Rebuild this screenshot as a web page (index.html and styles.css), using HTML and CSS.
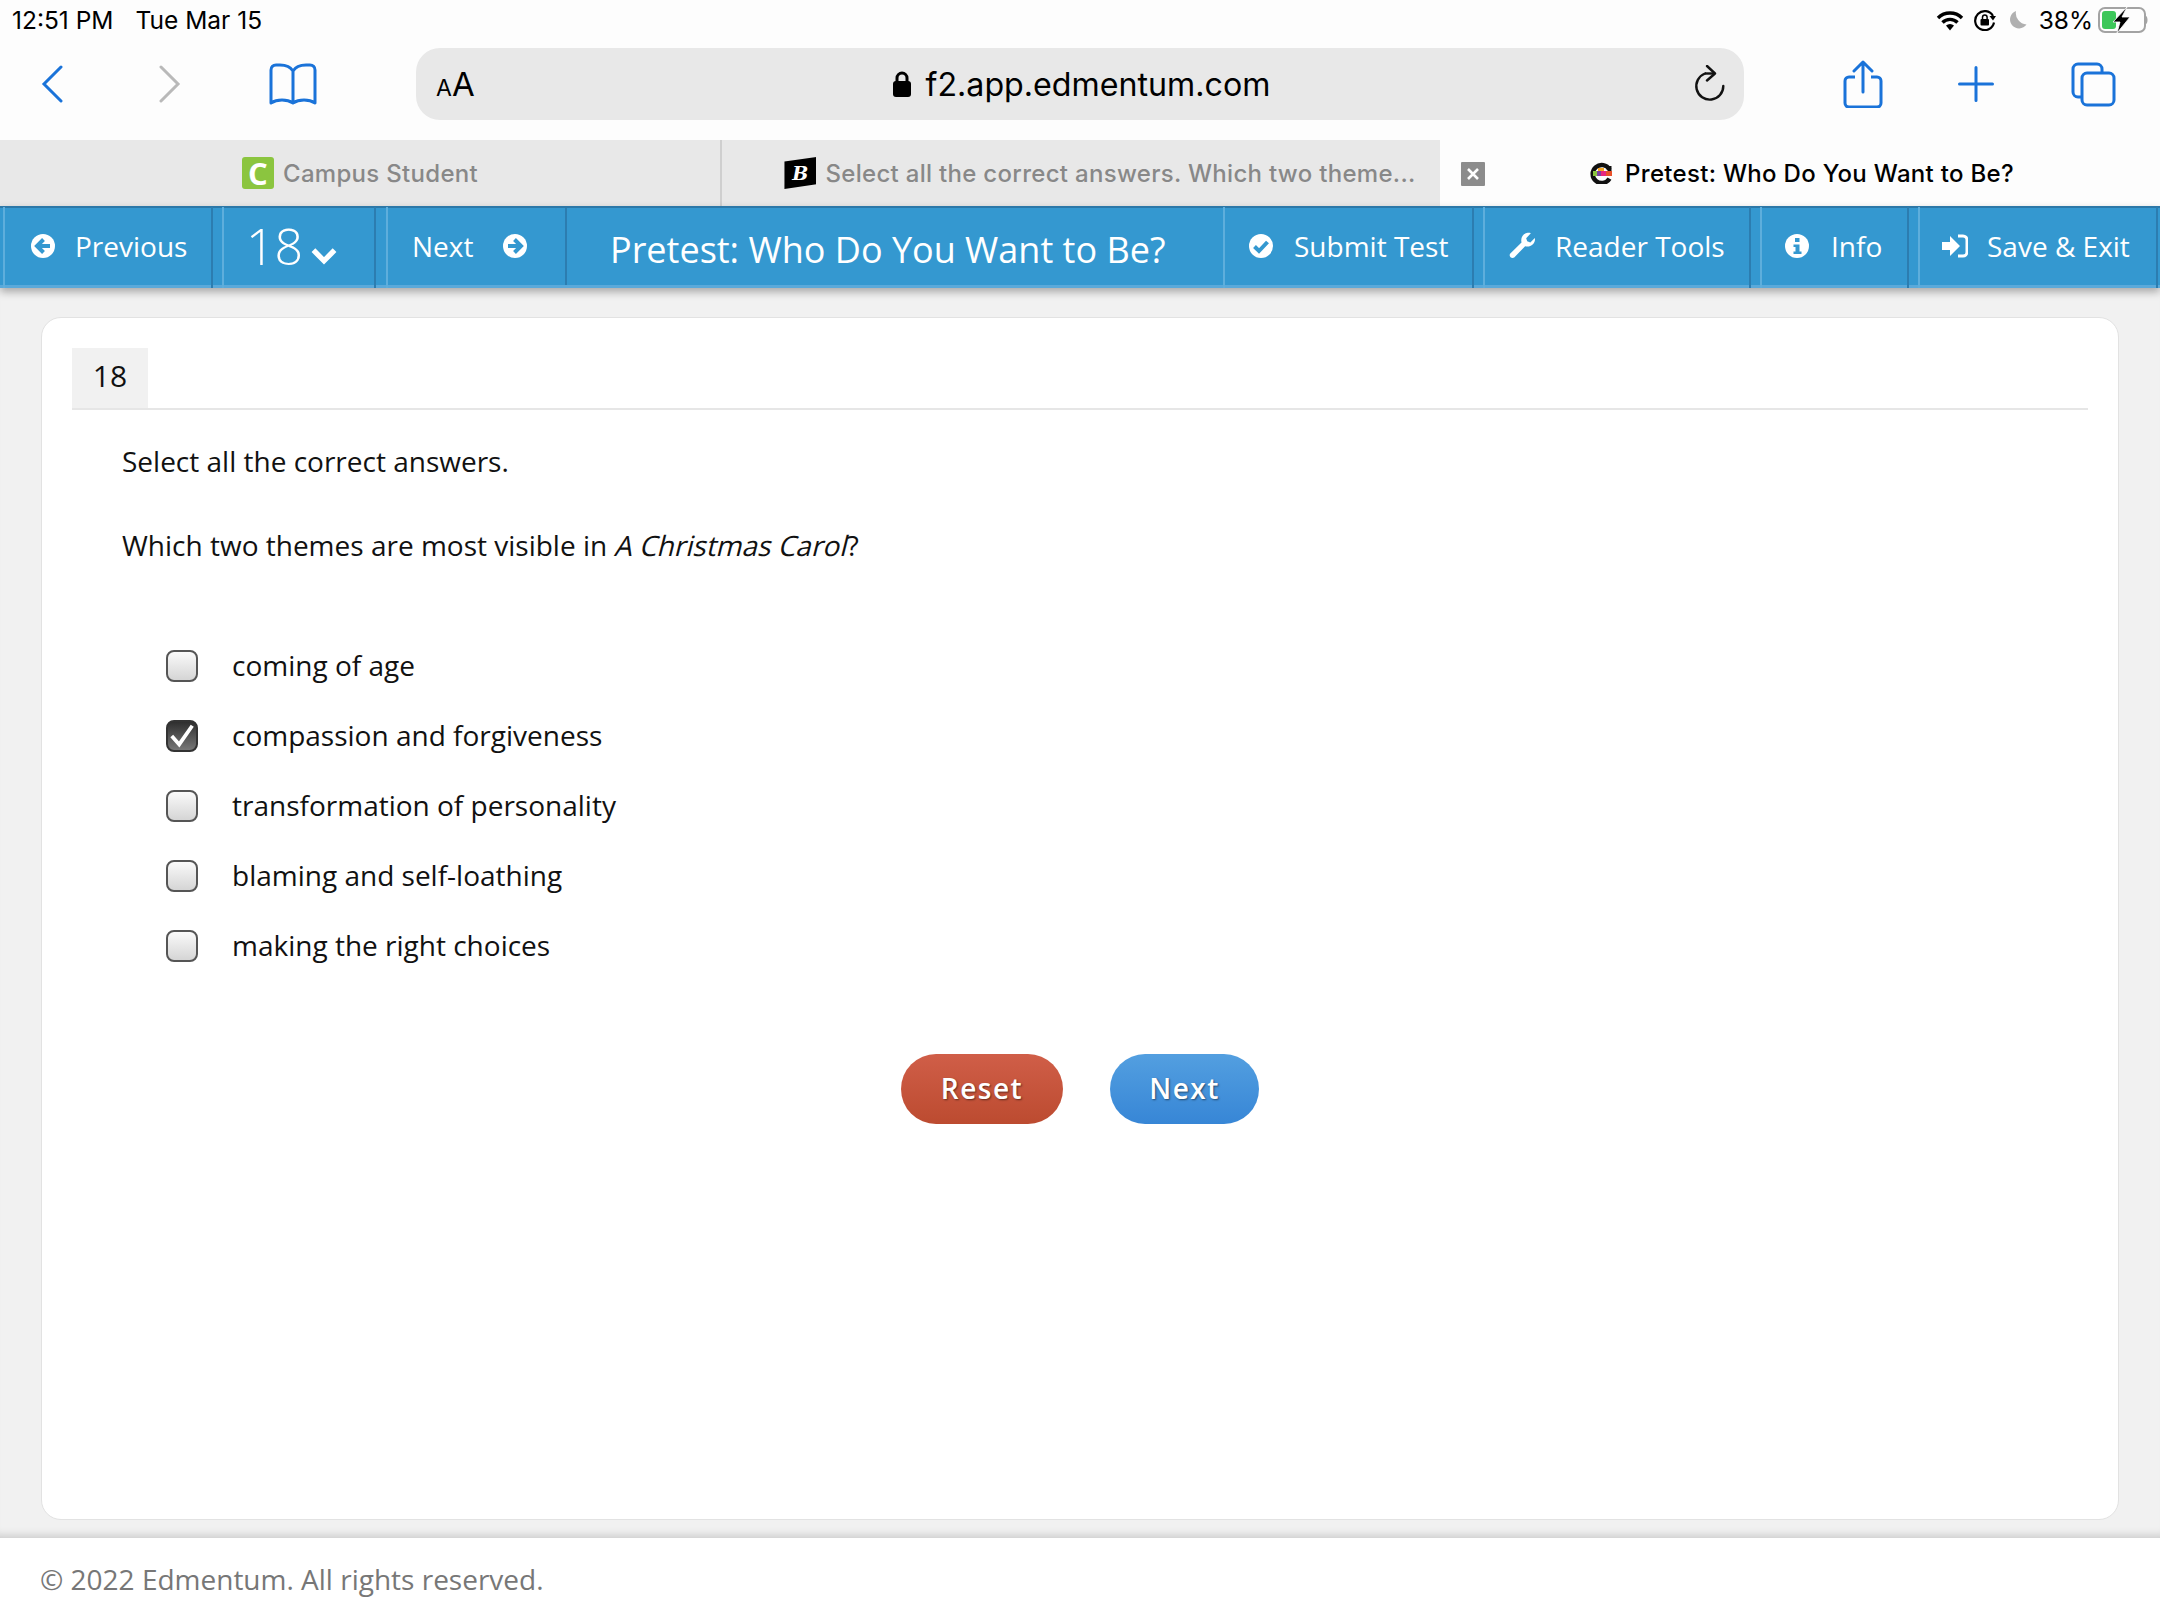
FILE: index.html
```html
<!DOCTYPE html>
<html lang="en">
<head>
<meta charset="utf-8">
<title>Pretest: Who Do You Want to Be?</title>
<link rel="stylesheet" href="styles.css">
</head>
<body>
<div class="status">
  <div class="status-left"><span>12:51 PM</span><span>Tue Mar 15</span></div>
  <div class="status-right">
    <svg class="i-wifi" viewBox="0 0 28 21"><path d="M2 8a17 17 0 0 1 24 0M6.500 12.500a10.500 10.500 0 0 1 15 0" fill="none" stroke="#000" stroke-width="3.400"/><path d="M10 15.500a6 6 0 0 1 8 0L14 20.500z" fill="#000"/></svg>
    <svg class="i-rot" viewBox="0 0 22 22"><path d="M19 7A9.500 9.500 0 1 0 20 13.500" fill="none" stroke="#000" stroke-width="2.200"/><path d="M15.500 7h6.500l-3 4.500z" fill="#000"/><rect x="6.500" y="10" width="8.500" height="6.500" rx="1" fill="#000"/><path d="M8.500 10V8.300a2.300 2.300 0 0 1 4.600 0V10" fill="none" stroke="#000" stroke-width="1.500"/></svg>
    <svg class="i-moon" viewBox="0 0 19 18"><path d="M8 0a9 9 0 1 0 10.500 13.500A11.500 11.500 0 0 1 8 0z" fill="#b0b0b0"/></svg>
    <span class="pct">38%</span>
    <svg class="i-batt" viewBox="0 0 50 26"><rect x="1" y="1" width="46" height="24" rx="6" fill="none" stroke="#a3a3a3" stroke-width="2"/><rect x="4" y="4" width="14" height="18" rx="3" fill="#3dc75a"/><path d="M48 9c2 1 2 7 0 8z" fill="#a3a3a3"/><path d="M29 0L15 15h7l-3 11 13-16h-8z" fill="#000" stroke="#fff" stroke-width=".8"/></svg>
  </div>
</div>

<div class="toolbar">
  <div class="tb-left">
    <svg class="i-back" viewBox="0 0 22 38"><path d="M20 2L3 19l17 17" fill="none" stroke="#1a73d9" stroke-width="3" stroke-linecap="round"/></svg>
    <svg class="i-fwd" viewBox="0 0 22 38"><path d="M2 2l17 17L2 36" fill="none" stroke="#b9b9b9" stroke-width="3" stroke-linecap="round"/></svg>
    <svg class="i-book" viewBox="0 0 48 42"><path d="M24 8C21 3 16 2 11 2H7C4 2 2 4 2 7v33c6-4 16-4 22 0 6-4 16-4 22 0V7c0-3-2-5-5-5h-4C32 2 27 3 24 8zM24 8v32" fill="none" stroke="#1a73d9" stroke-width="3" stroke-linejoin="round"/></svg>
  </div>
  <div class="url">
    <div class="aa"><span class="a-s">A</span><span class="a-b">A</span></div>
    <div class="url-c">
      <svg class="i-lock" viewBox="0 0 20 26"><path d="M5 11V7a5 5 0 0 1 10 0v4" fill="none" stroke="#000" stroke-width="3"/><rect x="1" y="10" width="18" height="16" rx="3" fill="#000"/></svg>
      <span>f2.app.edmentum.com</span>
    </div>
    <div class="url-r">
      <svg class="i-reload" viewBox="0 0 32 38"><path d="M11 8.500A13.500 13.500 0 1 0 29.300 21" fill="none" stroke="#111" stroke-width="2.400" stroke-linecap="round"/><path d="M13 1l8 7.500-8 7" fill="none" stroke="#111" stroke-width="2.400" stroke-linecap="round" stroke-linejoin="round"/><path d="M11 8.500h9" stroke="#111" stroke-width="2.400"/></svg>
    </div>
  </div>
  <div class="tb-right">
    <svg class="i-share" viewBox="0 0 40 48"><path d="M12 17H6a4 4 0 0 0-4 4v22a4 4 0 0 0 4 4h28a4 4 0 0 0 4-4V21a4 4 0 0 0-4-4h-6" fill="none" stroke="#1a73d9" stroke-width="3"/><path d="M20 32V2M11 11l9-9 9 9" fill="none" stroke="#1a73d9" stroke-width="3" stroke-linecap="round" stroke-linejoin="round"/></svg>
    <svg class="i-plus" viewBox="0 0 36 36"><path d="M18 1.500v33M1.500 18h33" fill="none" stroke="#1a73d9" stroke-width="3" stroke-linecap="round"/></svg>
    <svg class="i-tabs" viewBox="0 0 45 45"><path d="M10 35H7a5 5 0 0 1-5-5V7a5 5 0 0 1 5-5h19a5 5 0 0 1 5 5v3" fill="none" stroke="#1a73d9" stroke-width="3"/><rect x="11" y="11" width="32" height="32" rx="5" fill="none" stroke="#1a73d9" stroke-width="3"/></svg>
  </div>
</div>

<div class="tabs">
  <div class="tab"><span class="fav-c">C</span><span>Campus Student</span></div>
  <div class="tab tab-mid"><span class="fav-b"><span>B</span></span><span>Select all the correct answers. Which two theme...</span></div>
  <div class="tab tab-on">
    <span class="tab-x"><svg viewBox="0 0 12 12"><path d="M1 1l10 10M11 1L1 11" stroke="#fff" stroke-width="2.600"/></svg></span>
    <svg class="fav-e" viewBox="0 0 22 22"><path d="M19.500 16.500A9 9 0 1 1 19.500 7.500" fill="none" stroke="#111" stroke-width="4.500"/><path d="M18 4h3.500v5H18z" fill="#111"/><rect x="3" y="9" width="4" height="5" fill="#8cc63f"/><rect x="7" y="9" width="4" height="5" fill="#7b3fa0"/><rect x="11" y="9" width="5" height="5" fill="#e6267f"/><rect x="16" y="9" width="6" height="5" fill="#e8502a"/><rect x="8" y="6" width="6" height="3" fill="#f5a623"/></svg>
    <span>Pretest: Who Do You Want to Be?</span>
  </div>
</div>

<nav class="nav">
  <div class="nav-item w-prev">
    <svg class="nv-i" viewBox="0 0 24 24"><circle cx="12" cy="12" r="12" fill="#fff"/><path d="M12.500 5.500L6 12l6.500 6.500M6.500 12H19" fill="none" stroke="#3498d0" stroke-width="4"/></svg>
    <span>Previous</span>
  </div>
  <div class="nav-item w-num">
    <span class="num">18</span>
    <svg class="chev" viewBox="0 0 26 18"><path d="M3 4l10 10L23 4" fill="none" stroke="#fff" stroke-width="5"/></svg>
  </div>
  <div class="nav-item w-next">
    <span>Next</span>
    <svg class="nv-i" viewBox="0 0 24 24"><circle cx="12" cy="12" r="12" fill="#fff"/><path d="M11.500 5.500L18 12l-6.500 6.500M17.500 12H5" fill="none" stroke="#3498d0" stroke-width="4"/></svg>
  </div>
  <div class="nav-title"><span>Pretest: Who Do You Want to Be?</span></div>
  <div class="nav-item w-sub">
    <svg class="nv-i" viewBox="0 0 24 24"><circle cx="12" cy="12" r="12" fill="#fff"/><path d="M5.500 12.500l4.500 4.500 8.500-9" fill="none" stroke="#3498d0" stroke-width="4"/></svg>
    <span>Submit Test</span>
  </div>
  <div class="nav-item w-read">
    <svg class="nv-i nv-wrench" viewBox="0 0 26 26"><path d="M2 21L13 10c-1-4 1-8 5-9 1.500-.4 3-.3 4 .2L17.500 6l1 3 3 1 4.300-4.300c.6 2-.2 4.500-1.800 6-2.300 2.300-5 2.800-7.500 2L6 24.500c-2.500 1.500-5.500-1-4-3.500z" fill="#fff"/></svg>
    <span>Reader Tools</span>
  </div>
  <div class="nav-item w-info">
    <svg class="nv-i" viewBox="0 0 24 24"><circle cx="12" cy="12" r="12" fill="#fff"/><rect x="10" y="4" width="4.500" height="4" fill="#3498d0"/><path d="M8.500 10.500h6v7h2v2.500h-8v-2.500h2v-4.500h-2z" fill="#3498d0"/></svg>
    <span>Info</span>
  </div>
  <div class="nav-item w-save">
    <svg class="nv-i nv-save" viewBox="0 0 26 24"><path d="M0 8h8V2l10 10-10 10v-6H0z" fill="#fff"/><path d="M16 2h5a4 4 0 0 1 4 4v12a4 4 0 0 1-4 4h-5" fill="none" stroke="#fff" stroke-width="3"/></svg>
    <span>Save &amp; Exit</span>
  </div>
</nav>

<main class="main">
  <section class="card">
    <div class="q-head"><div class="q-num">18</div></div>
    <div class="q-body">
      <p class="q-p">Select all the correct answers.</p>
      <p class="q-p q-p2">Which two themes are most visible in <span class="oblique">A Christmas Carol</span>?</p>
      <ul class="opts">
        <li class="opt"><span class="cb"></span><span>coming of age</span></li>
        <li class="opt"><span class="cb cb-on"><svg viewBox="0 0 30 30"><path d="M4 15l8 9L26 4" fill="none" stroke="#fff" stroke-width="4"/></svg></span><span>compassion and forgiveness</span></li>
        <li class="opt"><span class="cb"></span><span>transformation of personality</span></li>
        <li class="opt"><span class="cb"></span><span>blaming and self-loathing</span></li>
        <li class="opt"><span class="cb"></span><span>making the right choices</span></li>
      </ul>
    </div>
    <div class="actions">
      <button class="btn btn-reset">Reset</button>
      <button class="btn btn-next">Next</button>
    </div>
  </section>
</main>

<footer class="footer">© 2022 Edmentum. All rights reserved.</footer>
</body>
</html>
```
FILE: styles.css
```css
* { box-sizing: border-box; }
html, body { margin: 0; padding: 0; }
body {
  width: 2160px;
  height: 1620px;
  overflow: hidden;
  display: flex;
  flex-direction: column;
  background: #fdfdfd;
  font-family: "Open Sans", sans-serif;
  color: #111;
}
svg { display: block; flex: none; }

/* status bar */
.status {
  height: 40px;
  padding: 0 12px 0 12px;
  display: flex;
  justify-content: space-between;
  align-items: center;
  font-family: Inter, sans-serif;
  font-size: 24.5px;
  color: #000;
}
.status-left { display: flex; gap: 22px; }
.status-right { display: flex; align-items: center; }
.i-wifi { width: 28px; height: 21px; margin-right: 10px; }
.i-rot { width: 22px; height: 22px; margin-right: 12px; }
.i-moon { width: 19px; height: 18px; margin-right: 12px; }
.pct { margin-right: 5px; }
.i-batt { width: 50px; height: 26px; }

/* toolbar */
.toolbar {
  height: 100px;
  padding: 8px 0 20px;
  display: flex;
  align-items: center;
}
.tb-left { width: 416px; display: flex; align-items: center; }
.i-back { width: 22px; height: 38px; margin-left: 41px; }
.i-fwd { width: 22px; height: 38px; margin-left: 96px; }
.i-book { width: 48px; height: 42px; margin-left: 88px; }
.url {
  width: 1328px;
  height: 72px;
  background: #e8e8e8;
  border-radius: 24px;
  display: grid;
  grid-template-columns: 1fr auto 1fr;
  align-items: center;
  padding: 0 18px 0 20px;
}
.aa { display: flex; align-items: baseline; color: #000; font-family: Inter, sans-serif; }
.a-s { font-size: 23px; }
.a-b { font-size: 33px; }
.url-c {
  display: flex;
  align-items: center;
  gap: 14px;
  font-family: Inter, sans-serif;
  font-size: 32.200px;
  color: #000;
}
.i-lock { width: 20px; height: 26px; }
.url-r { display: flex; justify-content: flex-end; }
.i-reload { width: 32px; height: 38px; }
.tb-right { flex: 1; display: flex; align-items: center; }
.i-share { width: 40px; height: 48px; margin-left: 99px; }
.i-plus { width: 36px; height: 36px; margin-left: 75px; }
.i-tabs { width: 45px; height: 45px; margin-left: 77px; }

/* tabs */
.tabs {
  height: 66px;
  display: grid;
  grid-template-columns: 720px 720px 720px;
  background: #e8e8e8;
  font-family: Inter, sans-serif;
  font-size: 24px;
  font-weight: 500;
  letter-spacing: .3px;
  color: #888;
}
.tab {
  display: flex;
  align-items: center;
  justify-content: center;
  gap: 9px;
  position: relative;
}
.tab-mid { border-left: 2px solid #cfcfcf; padding-left: 38px; }
.tab-on { background: #fdfdfd; color: #000; gap: 13px; padding-left: 4px; }
.fav-c {
  width: 32px;
  height: 32px;
  background: #8bc53f;
  border-radius: 3px;
  color: #fff;
  font-family: "Open Sans", sans-serif;
  font-size: 31px;
  font-weight: 700;
  line-height: 32px;
  text-align: center;
}
.fav-b {
  width: 32px;
  height: 32px;
  background: #000;
  clip-path: polygon(0 14%, 100% 0, 100% 85%, 0 100%);
  color: #fff;
  font-family: "DejaVu Serif", serif;
  font-size: 19px;
  font-weight: 700;
  font-style: italic;
  line-height: 32px;
  text-align: center;
}
.tab-x {
  position: absolute;
  left: 21px;
  top: 22px;
  width: 24px;
  height: 24px;
  background: #8c8c8c;
  border-radius: 1px;
  display: flex;
  align-items: center;
  justify-content: center;
}
.tab-x svg { width: 12px; height: 12px; }
.fav-e { width: 22px; height: 22px; }

/* nav */
.nav {
  height: 82px;
  flex: none;
  display: flex;
  position: relative;
  z-index: 2;
  background: #3498d0;
  border-top: 2px solid #2c78a8;
  border-bottom: 3px solid #5aa9da;
  box-shadow: 0 4px 8px rgba(0, 0, 0, .3);
  color: #fff;
  font-size: 28px;
}
.nav-item {
  display: flex;
  align-items: center;
  border-left: 2px solid #5eaedc;
  border-right: 2px solid #2c7db0;
  margin-top: -1px;
  margin-bottom: -3px;
  padding-bottom: 4px;
}
.w-prev { gap: 20px; padding-left: 26px; margin-left: 3px; width: 210px; }
.w-num { width: 154px; margin-left: 9px; padding-left: 22px; }
.w-next { width: 179px; margin-left: 10px; gap: 30px; padding-left: 24px; border-right: 0; }
.nav-title {
  width: 658px;
  border-left: 2px solid #2c7db0;
  padding-left: 43px;
  display: flex;
  align-items: center;
  font-size: 36px;
  padding-top: 6px;
}
.w-sub { width: 251px; gap: 21px; padding-left: 24px; }
.w-read { width: 268px; margin-left: 9px; gap: 20px; padding-left: 23px; }
.w-info { width: 149px; margin-left: 9px; gap: 22px; padding-left: 23px; }
.w-save { width: 240px; margin-left: 9px; gap: 19px; padding-left: 22px; }
.nv-i { width: 24px; height: 24px; }
.nv-save { width: 26px; }
.nv-wrench { width: 27px; height: 27px; }
.num { font-size: 50px; font-weight: 300; line-height: 1; }
.chev { width: 28px; height: 19px; margin-left: 7px; margin-top: 20px; }

/* main */
.main {
  flex: 1;
  min-height: 0;
  background: #f1f1f1;
  padding: 29px 41px 18px 41px;
  display: flex;
  box-shadow: inset 0 -10px 10px -8px rgba(0, 0, 0, .18);
}
.card {
  flex: 1;
  background: #fff;
  border: 1px solid #e2e2e2;
  border-radius: 20px;
  padding: 30px 30px 0;
  display: flex;
  flex-direction: column;
}
.q-head { border-bottom: 2px solid #e6e6e6; display: flex; }
.q-num {
  width: 76px;
  height: 60px;
  background: #f1f1f1;
  font-size: 30px;
  display: flex;
  align-items: center;
  justify-content: center;
  padding-bottom: 6px;
  color: #111;
}
.q-body { padding: 31px 0 0 50px; font-size: 28px; color: #111; }
.q-p { margin: 0; line-height: 40px; }
.q-p2 { margin-top: 44px; }
.oblique {
  display: inline-block;
  transform: skewX(-14deg);
  transform-origin: 0 75%;
}
.opts { list-style: none; margin: 65px 0 0; padding: 0 0 0 44px; }
.opt { height: 70px; display: flex; align-items: center; gap: 34px; }
.cb {
  width: 32px;
  height: 32px;
  margin-top: 2px;
  border: 2px solid #555;
  border-radius: 8px;
  background: linear-gradient(#fafafa, #d5d5d5);
  flex: none;
}
.cb-on { background: linear-gradient(#2f2f2f, #777); border-color: #333; }
.cb-on svg { width: 28px; height: 28px; }
.actions { display: flex; justify-content: center; gap: 47px; margin-top: 74px; }
.btn {
  height: 70px;
  border: 0;
  border-radius: 35px;
  color: #fff;
  font-family: "Open Sans", sans-serif;
  font-size: 28px;
  font-weight: 600;
  letter-spacing: 1.500px;
  padding: 0 0 2px;
  text-shadow: 1px 1px 2px rgba(0, 0, 0, .5);
}
.btn-reset { width: 162px; background: linear-gradient(#d05e48, #bc4b30); }
.btn-next { width: 149px; background: linear-gradient(#539fe0, #3786d6); }

/* footer */
.footer {
  height: 82px;
  flex: none;
  background: #fff;
  padding-left: 40px;
  display: flex;
  align-items: center;
  font-size: 28px;
  color: #777;
}
```
